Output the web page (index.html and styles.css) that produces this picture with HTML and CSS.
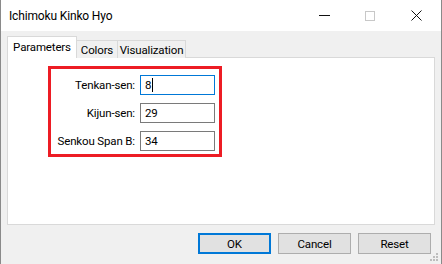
FILE: index.html
```html
<!DOCTYPE html>
<html lang="en">
<head>
    <meta charset="UTF-8">
    <title>Ichimoku Kinko Hyo</title>
    <link rel="stylesheet" href="styles.css">
</head>
<body>
    <div class="window">
        <!-- Title bar -->
        <div class="titlebar">
            <span class="title">Ichimoku Kinko Hyo</span>
            <div class="controls">
                <span class="ctl ctl-min"></span>
                <span class="ctl ctl-max"></span>
                <span class="ctl ctl-close">
                    <svg width="11" height="11" viewBox="0 0 11 11">
                        <path d="M0.5 0.5 L10.5 10.5 M10.5 0.5 L0.5 10.5" stroke="#111" stroke-width="1" fill="none"/>
                    </svg>
                </span>
            </div>
        </div>

        <div class="dialog-body">
            <!-- Tabs -->
            <div class="tabs">
                <div class="tab active tab-params">Parameters</div>
                <div class="tab tab-colors">Colors</div>
                <div class="tab tab-vis">Visualization</div>
            </div>

            <div class="panel">
                <div class="params">
                    <label class="param-label">Tenkan-sen:</label>
                    <div class="param-input focused">8<span class="caret"></span></div>
                    <label class="param-label">Kijun-sen:</label>
                    <div class="param-input">29</div>
                    <label class="param-label">Senkou Span B:</label>
                    <div class="param-input">34</div>
                </div>
            </div>

            <!-- Buttons -->
            <div class="buttons">
                <button class="btn btn-default">OK</button>
                <button class="btn">Cancel</button>
                <button class="btn">Reset</button>
            </div>
        </div>

        <svg class="grip" width="9" height="9" viewBox="0 0 9 9">
            <rect x="6" y="0" width="2" height="2" fill="#bdbdbd"/>
            <rect x="3" y="3" width="2" height="2" fill="#bdbdbd"/>
            <rect x="6" y="3" width="2" height="2" fill="#bdbdbd"/>
            <rect x="0" y="6" width="2" height="2" fill="#bdbdbd"/>
            <rect x="3" y="6" width="2" height="2" fill="#bdbdbd"/>
            <rect x="6" y="6" width="2" height="2" fill="#bdbdbd"/>
        </svg>
    </div>
</body>
</html>
```

FILE: styles.css
```css
body {
    margin: 0;
    padding: 0;
    font-family: Roboto, "Liberation Sans", sans-serif;
    font-size: 11.5px;
    letter-spacing: -0.15px;
    color: #000;
    background-color: #f0f0f0;
}

.window {
    position: relative;
    width: 442px;
    height: 264px;
    box-sizing: border-box;
    border-left: 1px solid #8a8a8a;
    border-right: 1px solid #8a8a8a;
    background-color: #f0f0f0;
    overflow: hidden;
}

/* Title bar */
.titlebar {
    height: 31px;
    background-color: #fff;
    display: flex;
    align-items: center;
    justify-content: space-between;
}

.title {
    padding-left: 8px;
    font-size: 12px;
    color: #000;
}

.controls {
    display: flex;
    align-items: center;
    height: 100%;
}

.ctl {
    width: 46px;
    height: 100%;
    display: flex;
    align-items: center;
    justify-content: center;
}

.ctl-min::before {
    content: "";
    width: 11px;
    height: 1px;
    background-color: #111;
}

.ctl-max::before {
    content: "";
    width: 8px;
    height: 8px;
    border: 1px solid #c8c8c8;
}

.ctl-close {
    padding-right: 2px;
}

/* Body */
.dialog-body {
    padding: 6px 6px 0 6px;
}

.tabs {
    display: flex;
    align-items: flex-end;
    height: 21px;
    position: relative;
    z-index: 1;
    margin-bottom: -1px;
}

.tab {
    height: 18px;
    box-sizing: border-box;
    border: 1px solid #d9d9d9;
    border-bottom: none;
    border-left: none;
    background-color: #f0f0f0;
    line-height: 19px;
    text-align: center;
}

.tab.active {
    height: 22px;
    background-color: #fff;
    border-left: 1px solid #d9d9d9;
    line-height: 20px;
}

.tab-params {
    width: 70px;
}

.tab-colors {
    width: 41px;
}

.tab-vis {
    width: 68px;
}

.panel {
    height: 168px;
    box-sizing: border-box;
    border: 1px solid #d9d9d9;
    background-color: #fff;
    padding: 8px 0 0 40px;
}

.params {
    width: 174px;
    box-sizing: border-box;
    border: 3px solid #ed1c24;
    padding: 6px 4px 3px 0;
    display: grid;
    grid-template-columns: 1fr 75px;
    column-gap: 5px;
    row-gap: 8px;
    align-items: center;
}

.param-label {
    text-align: right;
}

.param-input {
    height: 20px;
    box-sizing: border-box;
    border: 1px solid #7a7a7a;
    padding-left: 4px;
    line-height: 18px;
    display: flex;
    align-items: center;
}

.param-input.focused {
    border-color: #0078d7;
}

.caret {
    width: 1px;
    height: 14px;
    background-color: #000;
    margin-left: 1px;
}

/* Buttons */
.buttons {
    display: flex;
    justify-content: flex-end;
    gap: 7px;
    margin-top: 8px;
    padding-right: 4px;
}

.btn {
    width: 73px;
    height: 21px;
    box-sizing: border-box;
    border: 1px solid #adadad;
    background-color: #e1e1e1;
    font-family: inherit;
    font-size: 11.5px;
    letter-spacing: -0.15px;
    color: #000;
    padding: 0;
}

.btn-default {
    border: 2px solid #0078d7;
}

.grip {
    position: absolute;
    right: 2px;
    bottom: 2px;
}
```
